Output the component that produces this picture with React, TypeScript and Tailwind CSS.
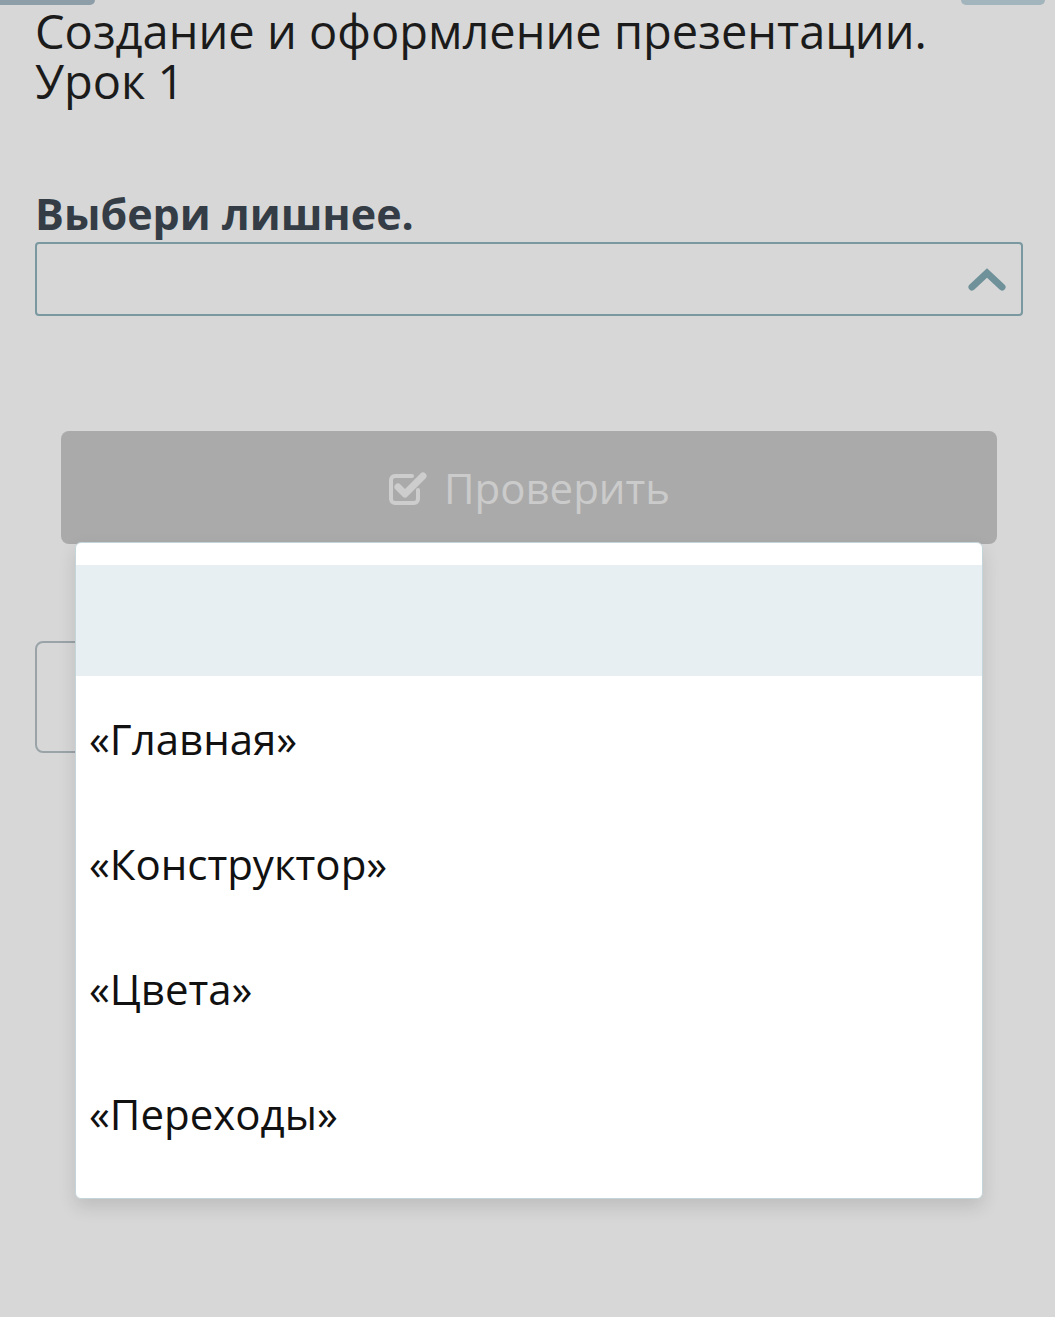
import React from "react";

const options = ["«Главная»", "«Конструктор»", "«Цвета»", "«Переходы»"];

const ChevronUp = () => (
  <svg width="40" height="26" viewBox="0 0 40 26" fill="none">
    <polyline
      points="5,21 20,7 35,21"
      stroke="#6f919a"
      strokeWidth="7"
      strokeLinecap="round"
      strokeLinejoin="miter"
    />
  </svg>
);

const CheckSquare = () => (
  <svg width="40" height="36" viewBox="0 0 40 36" fill="none">
    <path
      d="M30 20 V29 a4 4 0 0 1 -4 4 H7 a4 4 0 0 1 -4 -4 V10 a4 4 0 0 1 4 -4 H24"
      stroke="#cdcdcd"
      strokeWidth="4"
      strokeLinecap="round"
    />
    <polyline
      points="10,17 17,24 35,6"
      stroke="#cdcdcd"
      strokeWidth="7"
      strokeLinecap="round"
      strokeLinejoin="round"
    />
  </svg>
);

export default function App() {
  return (
    <div
      className="relative min-h-[1317px] bg-[#d7d7d7] overflow-hidden"
      style={{ fontFamily: '"Open Sans", "Noto Sans", sans-serif' }}
    >
      {/* header tabs peeking at top */}
      <div className="flex justify-between">
        <div className="h-[5px] w-[95px] rounded-br-[6px] bg-[#8d9ea8]" />
        <div className="mr-[10px] h-[5px] w-[84px] rounded-b-[6px] bg-[#a2b4bc]" />
      </div>

      <div className="pl-[35px] pr-[32px]">
        <h1 className="mt-[1px] text-[47px] leading-[50px] font-normal text-[#1b1b1b]">
          Создание и оформление презентации.
          <br />
          Урок 1
        </h1>

        <p className="mt-[83px] text-[43px] leading-[50px] font-bold text-[#343c45]">
          Выбери лишнее.
        </p>

        <div className="mt-[3px] flex h-[74px] items-center justify-end rounded-[4px] border-2 border-[#7a98a0] pr-[14px]">
          <ChevronUp />
        </div>

        <div className="mt-[115px] px-[26px]">
          <button className="flex h-[113px] w-full items-center justify-center gap-[16px] rounded-[8px] bg-[#aaaaaa] text-[42px] text-[#cbcbcb]">
            <CheckSquare />
            <span>Проверить</span>
          </button>
        </div>

        <div className="mt-[97px] h-[112px] w-[420px] rounded-[8px] border-2 border-[#9aa4a8]" />
      </div>

      {/* open dropdown list */}
      <div className="absolute left-[75px] top-[542px] w-[908px] rounded-[6px] border border-[#c4d5d9] bg-white py-[22px] shadow-[0_8px_18px_rgba(0,0,0,0.12)]">
        <div className="h-[111px] bg-[#e8eff2]" />
        {options.map((opt) => (
          <div
            key={opt}
            className="flex h-[125px] items-center px-[13px] text-[42px] text-[#111111]"
          >
            {opt}
          </div>
        ))}
      </div>
    </div>
  );
}
